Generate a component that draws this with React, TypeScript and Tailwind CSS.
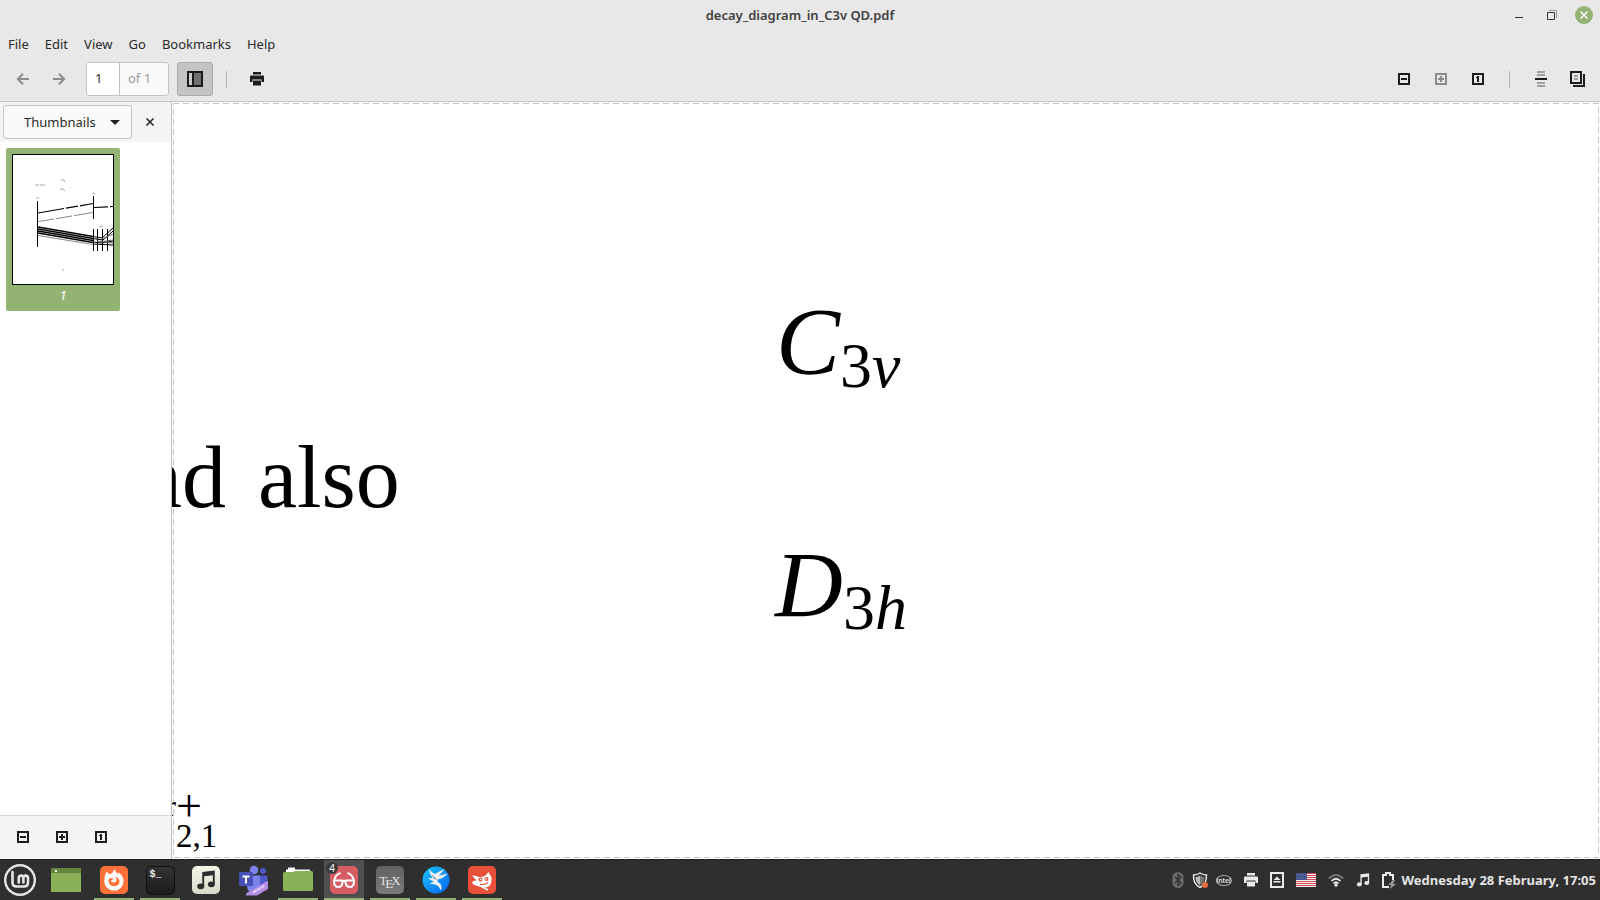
import React, { useState } from "react";

const menus = ["File", "Edit", "View", "Go", "Bookmarks", "Help"];

function BoxIcon({ kind }: { kind: "minus" | "plus" | "one" }) {
  return (
    <svg width="12" height="12" viewBox="0 0 12 12" aria-hidden="true">
      <path d="M1 1h10v10H1z" fill="none" stroke="currentColor" strokeWidth="2" />
      {kind === "minus" && <path d="M3 5h6v2H3z" fill="currentColor" />}
      {kind === "plus" && <path d="M3 5h6v2H3zM5 3h2v6H5z" fill="currentColor" />}
      {kind === "one" && <path d="M5 3h2v6H5V5H4V4h1z" fill="currentColor" />}
    </svg>
  );
}

function Arrow({ flip }: { flip?: boolean }) {
  return (
    <svg width="14" height="14" viewBox="0 0 14 14" className={flip ? "rotate-180" : ""} aria-hidden="true">
      <path d="M13 7H2M7 1.8 1.8 7 7 12.2" fill="none" stroke="currentColor" strokeWidth="2" />
    </svg>
  );
}

function PrinterIcon() {
  return (
    <svg width="14" height="14" viewBox="0 0 14 14" aria-hidden="true">
      <path d="M3 0h8v2.500H3zM1 3.500h12q1 0 1 1V10h-2.500V7.500h-9V10H0V4.500q0-1 1-1zM3 8.500h8v5H3z" fill="currentColor" />
    </svg>
  );
}

function MusicNote({ size }: { size: number }) {
  return (
    <svg width={size} height={size} viewBox="0 0 16 16" aria-hidden="true">
      <path d="M5 1.500 15 .3v11h-1.500V4.200L6.500 5V13H5z" fill="currentColor" />
      <ellipse cx="3.800" cy="13" rx="2.800" ry="2.300" fill="currentColor" />
      <ellipse cx="12.300" cy="11.400" rx="2.800" ry="2.300" fill="currentColor" />
    </svg>
  );
}

function ToolButton({
  label,
  dim,
  children,
}: {
  label: string;
  dim?: boolean;
  children: React.ReactNode;
}) {
  return (
    <button
      aria-label={label}
      disabled={dim}
      className="flex h-[34px] w-9 items-center justify-center text-[#1c1c1c] disabled:text-[#8c8c8c]"
    >
      {children}
    </button>
  );
}

function Thumbnail() {
  return (
    <svg viewBox="0 0 102 131" className="block w-full" aria-hidden="true">
      <rect x="0.5" y="0.5" width="101" height="130" fill="#fff" stroke="#000" />
      <g fill="none" stroke="#000">
        <path d="M25.5 47v46M81.5 42v23M81.5 75v22M85.5 75v22M90.5 75v22M95.5 75v22" />
        <path d="M26 59 52 54.5M54 54.100 66 52.200M68 51.800 81 49.500M82 53.500l14-.7M98 52.700l3-.2" strokeWidth="1.200" />
        <path d="M26 67.500 42 65M44 64.700 60 62M62 61.600 81 58.500" stroke="#888" />
        <path d="M26 73 81 82.500M26 75 81 84.500M26 77 81 86.500M26 79 81 88.500" strokeWidth="1.300" />
        <path d="M26 81.500 81 90.500" stroke="#888" />
        <path d="M81 82.500 90 84 101 74M81 84.500 91 86 101 77M81 88 90 89 101 87M81 90 101 91" />
        <path d="M85 87 101 89M90 85 101 80M88 88 101 86" stroke="#666" />
        <path d="M23 31h4M28 31h5M49 26h3l1 2M48 35h3l2 2M24 44h3M80 40q2-2 3 0M87 73l2-1 2 1M50 116h2" stroke="#aaa" />
      </g>
    </svg>
  );
}

function MintIcon() {
  return (
    <svg width="32" height="32" viewBox="0 0 32 32" aria-hidden="true">
      <circle cx="16" cy="16" r="14.8" fill="none" stroke="#e6e6e6" strokeWidth="2.4" />
      <path
        d="M8.5 8v10.5q0 4 4 4h7.500q4 0 4-4V14q0-2.400-2.300-2.400T19.400 14v4.500M19.400 14q0-2.400-2.300-2.400T14.800 14v4.500"
        fill="none"
        stroke="#e6e6e6"
        strokeWidth="2.6"
        strokeLinecap="round"
      />
    </svg>
  );
}

function DesktopIcon() {
  return (
    <svg width="30" height="24" viewBox="0 0 30 24" aria-hidden="true">
      <path d="M0 0h30v24H0z" fill="#8bb158" />
      <path d="M0 0h30v5H0z" fill="#66853f" />
      <path d="M4 2h2v2H4z" fill="#fff" />
    </svg>
  );
}

function FirefoxIcon() {
  return (
    <svg width="28" height="28" viewBox="0 0 28 28" aria-hidden="true">
      <rect width="28" height="28" rx="5" fill="#ff7139" />
      <path
        d="M6.500 5.500 9 8q1.500-.8 3-.5.500-2.500 3-4 .2 2.500 3 4.500l.5-1.500q5 3 5 9A9.600 9.600 0 0 1 4.300 15q0-5.500 2.200-9.500z"
        fill="#fff"
      />
      <path
        d="M9.300 12.500q2-1.200 4 .2-.2 1.500-2.600 1.800.8 2.300 3.300 2 2.500-.3 2.700-2.500.1-2-1.800-3.300 4.300.6 4.600 4.500.1 4.300-5.100 5-5.300-.2-6-5 .1-1.700.9-2.700z"
        fill="#ff7139"
      />
    </svg>
  );
}

function TerminalIcon() {
  return (
    <span className="flex size-[29px] items-start rounded-[5px] border border-[#111] bg-linear-to-b from-[#333] to-[#1c1c1c] pl-[3px] pt-[2px] font-['Liberation_Mono',monospace] text-[10px] leading-[11px] font-bold text-[#eee]">
      $_
    </span>
  );
}

function TeamsIcon() {
  return (
    <svg width="32" height="32" viewBox="0 0 32 32" aria-hidden="true">
      <circle cx="18" cy="6" r="4.300" fill="#7b83eb" />
      <circle cx="27" cy="7" r="3" fill="#5059c9" />
      <path d="M21 11.500h9q1.500 0 1.500 1.500v7q0 5-6 5h-4.500z" fill="#5059c9" />
      <path d="M11 11.500h13v10q0 7.500-6.500 7.500T11 21.500z" fill="#7b83eb" />
      <rect x="3" y="8" width="14" height="14" rx="1.500" fill="#4650b8" />
      <path d="M6.500 11.500h7v1.900h-2.500v6H9v-6H6.500z" fill="#fff" />
      <path d="M10 29.500 30 17.500q3-1 3 1v6l-12 7H10z" fill="#b28ee2" />
      <path d="m17 28.500 12-7" stroke="#f0e6ff" strokeWidth="2" strokeDasharray="1.500 .8" />
    </svg>
  );
}

function FolderIcon() {
  return (
    <svg width="30" height="26" viewBox="0 0 30 26" aria-hidden="true">
      <path d="M5 1q0-.5.5-.5h6q.5 0 .5.500v1.500h14.500q.5 0 .5.500V8H3V3q0-.5.500-.5H5z" fill="#fff" />
      <path d="M0 6.500Q0 5 1.500 5H10l2-1h16.500Q30 4 30 5.500v17q0 1.500-1.500 1.500h-27Q0 24 0 22.500z" fill="#8bb158" />
    </svg>
  );
}

function ReaderIcon() {
  return (
    <svg width="28" height="28" viewBox="0 0 28 28" aria-hidden="true">
      <rect width="28" height="28" rx="5" fill="#d65d61" />
      <g fill="none" stroke="#fff" strokeWidth="2">
        <path d="M4 14.500h8.500q.3 6.500-4.200 6.500T4 14.500zM15.500 14.500H24q.3 6.500-4.200 6.500t-4.300-6.500z" strokeLinejoin="round" />
        <path d="M12.500 15.500q1.500-1 3 0M4.200 14Q6 8 10.500 7M23.800 14Q22 8 17.500 7" strokeWidth="1.800" />
      </g>
    </svg>
  );
}

function TexIcon() {
  return (
    <span className="flex size-7 items-center justify-center rounded-[5px] bg-linear-to-b from-[#626262] to-[#7a7a7a] font-['Liberation_Serif',serif] text-[13px] leading-none text-[#e4e4e4]">
      T<span className="-mx-0.5 pt-1.5">E</span>X
    </span>
  );
}

function BirdIcon() {
  return (
    <svg width="28" height="28" viewBox="0 0 28 28" aria-hidden="true">
      <defs>
        <linearGradient id="bird" x2="1" y2="1">
          <stop offset="0" stopColor="#18c4ff" />
          <stop offset="1" stopColor="#0a62ee" />
        </linearGradient>
      </defs>
      <circle cx="14" cy="14" r="13.500" fill="url(#bird)" />
      <path
        d="M7 3q3 4 6 5 4-2.500 9.500-5-2.500 4-6 6.500 4.500-.5 9-2-4 5-9.500 6-1.500 2 1.500 3.500 3 2 1.500 7.500-1.500-4-4.500-5.500-3-1.500-7-1 2.500-2 4.500-2.500-3.500-1-6.500-4 2.500 1 5 .5Q7.500 8.500 7 3z"
        fill="#eef1f5"
      />
      <path d="m9 8 7 6-4-1z" fill="#8c99a8" />
    </svg>
  );
}

function FoxIcon() {
  return (
    <svg width="28" height="28" viewBox="0 0 28 28" aria-hidden="true">
      <rect width="28" height="28" rx="5" fill="#e8503a" />
      <path
        d="m20.500 6 3 5.500q.6 5-1.500 8-4 3.500-9.500 1.500L5 18.500q-1.500-2 0-3.500l3.500-.5L4 9.500q4-.3 7 1.500 3.500.5 6.500-1.500z"
        fill="#fff"
      />
      <circle cx="12.500" cy="13.500" r="2" fill="#e8503a" />
      <circle cx="18.500" cy="13" r="2" fill="#e8503a" />
      <circle cx="12.800" cy="13.500" r=".8" fill="#fff" />
      <circle cx="18.300" cy="13" r=".8" fill="#fff" />
      <path d="M12 18q4 1.500 8-1.500" stroke="#e8503a" strokeWidth="1.200" fill="none" />
      <path d="m14 21 6 3" stroke="#fff" strokeWidth="1.500" />
    </svg>
  );
}

function Tray() {
  return (
    <div className="flex items-center gap-3 text-[#eaeaea]">
      <div className="flex items-center gap-2">
        <svg width="12" height="16" viewBox="0 0 12 16" aria-label="Bluetooth">
          <rect x=".5" width="11" height="16" rx="5.500" fill="#6b6b6b" />
          <path d="m3 5 6 6-3 2.500v-11L9 5l-6 6" fill="none" stroke="#2f2f2f" strokeWidth="1.200" />
        </svg>
        <svg width="16" height="17" viewBox="0 0 16 17" aria-label="Updates">
          <path d="M8 1q3 2 6.500 2 .5 9-6.500 12.500Q1 12 1.500 3 5 3 8 1z" fill="none" stroke="#eaeaea" strokeWidth="1.400" />
          <path d="M8 3.500v10Q3.500 10.500 3.500 5 6 5 8 3.500z" fill="#bbb" />
          <path d="M8 3.500q2 1.500 4.500 1.500 0 5.500-4.500 8.500z" fill="#777" />
          <circle cx="13" cy="13" r="3" fill="#e2703a" />
        </svg>
        <span className="flex h-[11px] w-4 items-center justify-center rounded-[50%] border border-[#aaa] font-['Liberation_Sans',sans-serif] text-[7px] leading-none font-bold text-[#ddd]">
          intel
        </span>
      </div>
      <PrinterIcon />
      <svg width="14" height="16" viewBox="0 0 14 16" aria-label="Removable drives">
        <path d="M1 1h12v14H1z" fill="none" stroke="currentColor" strokeWidth="2" />
        <path d="m7 4.500 3.500 3.500h-7zM3.500 9h7v1.500h-7z" fill="currentColor" />
      </svg>
      <svg width="20" height="14" viewBox="0 0 20 14" aria-label="Keyboard layout">
        <path d="M0 0h20v14H0z" fill="#f3f3f3" />
        <path d="M0 .5h20M0 2.500h20M0 4.500h20M0 6.500h20M0 8.500h20M0 10.500h20M0 12.500h20" stroke="#d84a55" />
        <path d="M0 0h11v7H0z" fill="#46548c" />
        <path d="M1 2h9M1 5h9" stroke="#6f7cab" strokeDasharray="1 1" />
      </svg>
      <svg width="16" height="14" viewBox="0 0 16 14" fill="none" aria-label="Network">
        <path d="M1 5.500q7-7 14 0" stroke="#777" strokeWidth="2" />
        <path d="M3.500 8q4.500-4.500 9 0M5.500 10.500q2.500-2.500 5 0" stroke="#eaeaea" strokeWidth="1.700" />
        <circle cx="8" cy="12" r="1.700" fill="#eaeaea" />
      </svg>
      <MusicNote size={14} />
      <svg width="14" height="17" viewBox="0 0 14 17" aria-label="Battery">
        <path d="M7 15H1V3h3V1h4v2h3v5" fill="none" stroke="#eaeaea" strokeWidth="2" />
        <path d="m11 8-5 5h3l-1 4 6-5h-3l2-4z" fill="#999" />
      </svg>
    </div>
  );
}

type Task = { name: string; icon: React.ReactNode; state: string };

const launchers: Task[] = [
  { name: "Menu", icon: <MintIcon />, state: "" },
  { name: "Show desktop", icon: <DesktopIcon />, state: "" },
];

const apps: Task[] = [
  { name: "Firefox", icon: <FirefoxIcon />, state: "open" },
  { name: "Terminal", icon: <TerminalIcon />, state: "open" },
  {
    name: "Music",
    icon: (
      <span className="flex size-7 items-center justify-center rounded-[5px] bg-linear-to-b from-[#f5f5e8] to-[#d9d9cb] text-[#2c2c2c]">
        <MusicNote size={20} />
      </span>
    ),
    state: "",
  },
  { name: "Teams", icon: <TeamsIcon />, state: "" },
  { name: "Files", icon: <FolderIcon />, state: "open" },
  { name: "Document viewer", icon: <ReaderIcon />, state: "active" },
  { name: "TeX editor", icon: <TexIcon />, state: "open" },
  { name: "Bird", icon: <BirdIcon />, state: "open" },
  { name: "Image editor", icon: <FoxIcon />, state: "open" },
];

function TaskGroup({ tasks }: { tasks: Task[] }) {
  return (
    <div className="flex gap-1.5">
      {tasks.map((t) => (
        <button
          key={t.name}
          aria-label={t.name}
          className={
            "relative flex w-10 items-center justify-center border-b-2 pt-0.5 " +
            (t.state === "active"
              ? "border-[#92b372] bg-[#4f4f4f]"
              : t.state === "open"
                ? "border-[#92b372]"
                : "border-transparent")
          }
        >
          {t.icon}
          {t.state === "active" && (
            <span className="absolute top-0.5 left-0.5 flex size-3 items-center justify-center rounded-full bg-[#3a3a3a] text-[10px] leading-none text-white">
              4
            </span>
          )}
        </button>
      ))}
    </div>
  );
}

function Taskbar() {
  return (
    <footer className="flex h-[41px] shrink-0 items-center justify-between border-t border-[#222] bg-[#2f2f2f] pr-1">
      <nav className="flex h-full gap-2">
        <TaskGroup tasks={launchers} />
        <TaskGroup tasks={apps} />
      </nav>
      <div className="flex items-center gap-1.5">
        <Tray />
        <time className="pt-px text-[13px] font-bold text-[#e4e4e4]">Wednesday 28 February, 17:05</time>
      </div>
    </footer>
  );
}

function Page() {
  return (
    <main className="relative min-w-0 flex-1 overflow-hidden bg-white p-px font-['Liberation_Serif',serif] text-black">
      <svg className="block h-full w-full" aria-hidden="true">
        <rect x="0" y="0" width="100%" height="100%" fill="none" stroke="#c4c4c4" strokeWidth="2" strokeDasharray="6 4" />
      </svg>
      <p className="absolute top-[326px] -left-[34px] flex gap-8 text-[88px] leading-[100px] whitespace-nowrap">
        <span>nd</span>
        <span>also</span>
      </p>
      <p className="absolute top-[187px] left-[604px] flex items-baseline text-[96px] leading-[106px] italic">
        C<span className="relative top-[13px] text-[64px] leading-none not-italic">3</span>
        <span className="relative top-[13px] text-[64px] leading-none">v</span>
      </p>
      <p className="absolute top-[429px] left-[603px] flex items-baseline text-[94px] leading-[106px] italic">
        D<span className="relative top-[13px] text-[64px] leading-none not-italic">3</span>
        <span className="relative top-[13px] text-[64px] leading-none">h</span>
      </p>
      <p className="absolute top-[688px] -left-[6px] flex items-center text-[46px] leading-8">
        <span className="text-[30px]">r</span>
        <span>+</span>
      </p>
      <p className="absolute top-[720px] left-1 text-[33px] leading-7">2,1</p>
    </main>
  );
}

export default function App() {
  const [sidebar, setSidebar] = useState(true);
  return (
    <div className="flex h-screen flex-col overflow-hidden bg-[#e8e8e8] font-['Noto_Sans',sans-serif] text-[13px] text-[#2b2b2b]">
      <header className="grid h-[30px] shrink-0 grid-cols-[1fr_auto_1fr] items-center">
        <h1 className="col-start-2 pt-0.5 text-[13px] font-semibold text-[#404040]">decay_diagram_in_C3v QD.pdf</h1>
        <div className="flex items-center justify-end gap-[13px] pr-[7px] text-[#333]">
          <button aria-label="Minimize" className="flex size-5 items-center justify-center">
            <svg width="8" height="10" viewBox="0 0 8 10">
              <path d="M0 7h8v1H0z" fill="currentColor" />
            </svg>
          </button>
          <button aria-label="Restore" className="flex size-5 items-center justify-center">
            <svg width="10" height="10" viewBox="0 0 10 10" fill="none">
              <path d="M2 .5h7.500V8" stroke="#999" />
              <path d="M.5 2.500h7v7h-7z" stroke="currentColor" />
            </svg>
          </button>
          <button aria-label="Close" className="flex size-[18px] items-center justify-center rounded-full bg-[#92b372]">
            <svg width="8" height="8" viewBox="0 0 8 8">
              <path d="m.5.5 7 7m0-7-7 7" stroke="#fff" strokeWidth="1.500" />
            </svg>
          </button>
        </div>
      </header>

      <nav className="flex h-[29px] shrink-0 items-center gap-4 px-2">
        {menus.map((m) => (
          <button key={m}>{m}</button>
        ))}
      </nav>

      <div className="flex h-[43px] shrink-0 items-start justify-between border-b border-[#c6c6c6] pt-[3px] pr-1 pl-[5px]">
        <div className="flex items-center">
          <ToolButton label="Back" dim>
            <Arrow />
          </ToolButton>
          <ToolButton label="Forward" dim>
            <Arrow flip />
          </ToolButton>
          <div className="ml-[9px] flex h-[34px] w-[83px] overflow-hidden rounded-[3px] border border-[#c2c2c2] bg-[#fafafa]">
            <input
              aria-label="Page"
              defaultValue="1"
              className="w-[33px] border-r border-[#c2c2c2] bg-white pl-2 text-[13px] outline-none"
            />
            <span className="flex items-center pl-2 text-[#999]">of 1</span>
          </div>
          <button
            aria-label="Toggle sidebar"
            aria-pressed={sidebar}
            onClick={() => setSidebar(!sidebar)}
            className="ml-2 flex h-[34px] w-9 items-center justify-center rounded-[3px] border border-[#aaa] bg-[#c4c4c4]"
          >
            <svg width="16" height="16" viewBox="0 0 16 16">
              <path d="M1 1h14v14H1z" fill="#ccc" stroke="#1a1a1a" strokeWidth="2" />
              <path d="M6 2h8v12H6z" fill="#6f6f6f" />
              <path d="M5 2h2v12H5z" fill="#1a1a1a" />
            </svg>
          </button>
          <span className="ml-[13px] mr-3 h-[17px] w-px bg-[#b4b4b4]" />
          <ToolButton label="Print">
            <PrinterIcon />
          </ToolButton>
        </div>
        <div className="flex items-center gap-px">
          <ToolButton label="Zoom out">
            <BoxIcon kind="minus" />
          </ToolButton>
          <ToolButton label="Zoom in" dim>
            <BoxIcon kind="plus" />
          </ToolButton>
          <ToolButton label="Normal size">
            <BoxIcon kind="one" />
          </ToolButton>
          <span className="mx-3 h-[17px] w-px bg-[#b4b4b4]" />
          <ToolButton label="Continuous">
            <svg width="12" height="16" viewBox="0 0 12 16">
              <path d="M2 0h8v2H2zM2 3h8v2H2zM2 11h8v2H2zM2 14h8v2H2z" fill="#a0a0a0" />
              <path d="M0 7h12v2H0z" fill="#1c1c1c" />
            </svg>
          </ToolButton>
          <ToolButton label="Dual page">
            <svg width="16" height="16" viewBox="0 0 16 16">
              <path d="M1 1h10v11H1z" fill="none" stroke="#1c1c1c" strokeWidth="2" />
              <path d="M4 4h4v2H4zM4 7h4v2H4z" fill="#a0a0a0" />
              <path d="M13 3h2v13H3v-2h10z" fill="#1c1c1c" />
            </svg>
          </ToolButton>
        </div>
      </div>

      <div className="flex min-h-0 flex-1">
        {sidebar && (
          <aside className="flex w-[172px] shrink-0 flex-col border-r border-[#c2c2c2] bg-white">
            <div className="flex h-10 shrink-0 items-center bg-[#f4f4f4] pl-[3px]">
              <label className="relative">
                <select
                  aria-label="Sidebar view"
                  className="h-[34px] w-[129px] appearance-none rounded-[3px] border border-[#c2c2c2] bg-[#fafafa] pt-0.5 pl-5 text-[13px]"
                >
                  <option>Thumbnails</option>
                </select>
                <svg width="10" height="5" viewBox="0 0 10 5" className="pointer-events-none absolute top-[15px] right-3">
                  <path d="M0 0h10L5 5z" fill="#222" />
                </svg>
              </label>
              <button
                aria-label="Close sidebar"
                onClick={() => setSidebar(false)}
                className="ml-2 flex size-5 items-center justify-center"
              >
                <svg width="8" height="8" viewBox="0 0 8 8">
                  <path d="m.5.5 7 7m0-7-7 7" stroke="#222" strokeWidth="1.500" />
                </svg>
              </button>
            </div>
            <div className="flex-1 p-1.5">
              <button className="block w-[114px] rounded-[2px] bg-[#92b372] px-1.5 pt-1.5 pb-4">
                <Thumbnail />
                <span className="block h-[10px] pt-px text-center leading-[18px] text-white italic">1</span>
              </button>
            </div>
            <div className="flex h-11 shrink-0 items-center gap-[3px] border-t border-[#d6d6d6] bg-[#f4f4f4] pb-0.5 pl-[5px]">
              <ToolButton label="Shrink thumbnails">
                <BoxIcon kind="minus" />
              </ToolButton>
              <ToolButton label="Enlarge thumbnails">
                <BoxIcon kind="plus" />
              </ToolButton>
              <ToolButton label="Reset thumbnails">
                <BoxIcon kind="one" />
              </ToolButton>
            </div>
          </aside>
        )}
        <Page />
      </div>

      <Taskbar />
    </div>
  );
}
